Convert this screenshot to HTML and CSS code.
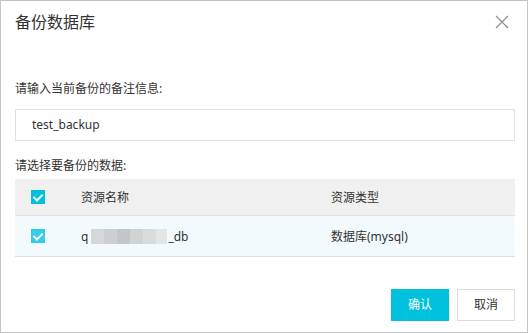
FILE: index.html
```html
<!DOCTYPE html>
<html lang="zh">
<head>
  <meta charset="UTF-8">
  <title>备份数据库</title>
  <link rel="stylesheet" href="styles.css">
</head>
<body>

<div class="dialog">
  <div class="dialog-head">
    <span class="dialog-title">备份数据库</span>
    <svg class="close" width="14" height="14" viewBox="0 0 14 14">
      <path d="M1 1 L13 13 M13 1 L1 13" stroke="#8c8c8c" stroke-width="1.1" fill="none"/>
    </svg>
  </div>

  <div class="dialog-body">
    <div class="label">请输入当前备份的备注信息:</div>
    <div class="input">test_backup</div>

    <div class="label label-table">请选择要备份的数据:</div>
    <div class="table">
      <div class="tr thead">
        <div class="td td-check"><span class="check"></span></div>
        <div class="td td-name">资源名称</div>
        <div class="td td-type">资源类型</div>
      </div>
      <div class="tr trow">
        <div class="td td-check"><span class="check check-light"></span></div>
        <div class="td td-name">q<span class="blur"><i></i><i></i><i></i><i></i><i></i><i></i></span>_db</div>
        <div class="td td-type">数据库(mysql)</div>
      </div>
    </div>
  </div>

  <div class="dialog-foot">
    <div class="btn btn-primary">确认</div>
    <div class="btn">取消</div>
  </div>
</div>

</body>
</html>
```

FILE: styles.css
```css
body {
  margin: 0;
  padding: 0;
  background-color: #fff;
  font-family: "Noto Sans", "Noto Sans CJK SC", sans-serif;
  color: #333;
}

.dialog {
  width: 528px;
  height: 333px;
  box-sizing: border-box;
  border: 1px solid #c4c4c4;
  padding: 0 12px 0 14px;
  display: flex;
  flex-direction: column;
}

.dialog-head {
  display: flex;
  align-items: center;
  justify-content: space-between;
  height: 42px;
}

.dialog-title {
  font-size: 16px;
  color: #333;
  line-height: 20px;
}

.close {
  margin-right: 6px;
}

.dialog-body {
  display: flex;
  flex-direction: column;
}

.label {
  font-size: 12px;
  line-height: 16px;
  margin-top: 38px;
  color: #333;
}

.label-table {
  margin-top: 17px;
}

.input {
  margin-top: 12px;
  height: 32px;
  box-sizing: border-box;
  border: 1px solid #e0e0e0;
  padding-left: 16px;
  font-size: 12px;
  line-height: 30px;
  color: #333;
}

.table {
  margin-top: 5px;
  font-size: 12px;
}

.tr {
  display: flex;
  align-items: center;
  border-bottom: 1px solid #e0e0e0;
}

.thead {
  height: 36px;
  background-color: #f0f0f0;
}

.trow {
  height: 40px;
  background-color: #f3fafd;
}

.td-check {
  width: 66px;
  padding-left: 16px;
  box-sizing: border-box;
  display: flex;
  align-items: center;
}

.td-name {
  width: 250px;
  display: flex;
  align-items: center;
}

.check {
  width: 14px;
  height: 14px;
  background-color: #00c1de;
  position: relative;
}

.check-light {
  background-color: #33cde5;
}

.check::after {
  content: "";
  position: absolute;
  left: 4px;
  top: 2px;
  width: 4px;
  height: 7px;
  border-right: 2px solid #fff;
  border-bottom: 2px solid #fff;
  transform: rotate(45deg);
}

.blur {
  display: inline-flex;
  height: 15px;
  margin: 0 1px 0 3px;
}

.blur i {
  width: 13px;
  height: 15px;
  background-color: #d4d8da;
}

.blur i:nth-child(2) { background-color: #ccced3; }
.blur i:nth-child(3) { background-color: #c3c6c9; }
.blur i:nth-child(4) { background-color: #cfd3d4; }
.blur i:nth-child(5) { background-color: #d8dcdc; }
.blur i:nth-child(6) { background-color: #e2e6e6; width: 11px; }

.dialog-foot {
  margin-top: auto;
  margin-bottom: 11px;
  display: flex;
  justify-content: flex-end;
  gap: 8px;
}

.btn {
  width: 58px;
  height: 32px;
  box-sizing: border-box;
  border: 1px solid #dcdcdc;
  font-size: 12px;
  line-height: 30px;
  text-align: center;
  color: #333;
}

.btn-primary {
  background-color: #00c1de;
  border-color: #00c1de;
  color: #fff;
}
```
